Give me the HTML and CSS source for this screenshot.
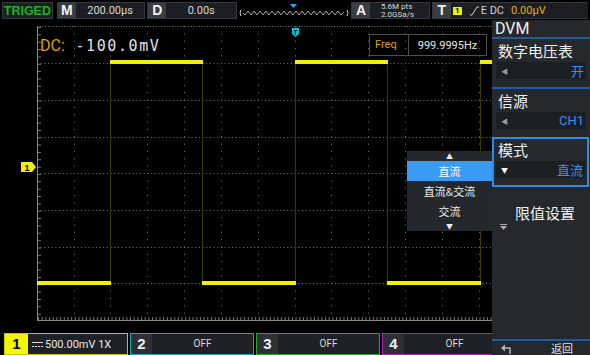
FILE: index.html
```html
<!DOCTYPE html>
<html lang="zh">
<head>
    <meta charset="UTF-8">
    <title>DVM</title>
    <link rel="stylesheet" href="styles.css">
</head>
<body>
<div class="screen">
    <div class="topbar">
        <div class="tbox triged">TRIGED</div>
        <div class="tbox tb-m"><span class="tkey">M</span><span class="tval">200.00µs</span></div>
        <div class="tbox tb-d"><span class="tkey">D</span><span class="tval">0.00s</span></div>
        <div class="mini">
            <svg width="110" height="18" viewBox="0 0 110 18">
                <path d="M2 8 Q0 11 2 14" stroke="#cfcfcf" fill="none"/>
                <path d="M108 8 Q110 11 108 14" stroke="#cfcfcf" fill="none"/>
                <polyline fill="none" stroke="#a8a8a8" stroke-width="1" points="4,11 6,13 9,9 12,13 15,9 18,13 21,9 24,13 27,9 30,13 33,9 36,13 39,9 42,13 45,9 48,13 51,9 54,13 57,9 60,13 63,9 66,13 69,9 72,13 75,9 78,13 81,9 84,13 87,9 90,13 93,9 96,13 99,9 102,13 105,10"/>
                <polygon points="51,2 58,2 54.5,6" fill="#3c9cf0"/>
            </svg>
        </div>
        <div class="tbox tb-a"><span class="tkey">A</span><span class="tval two"><span>5.6M pts</span><span>2.0GSa/s</span></span></div>
        <div class="tbox tb-t">
            <span class="tkey">T</span>
            <span class="chip">1</span>
            <svg class="slope" width="9" height="10" viewBox="0 0 9 10"><polyline points="0,9 2,9 7,1 9,1" fill="none" stroke="#cfcfcf"/></svg>
            <span class="trig-t">E DC</span>
            <span class="trig-v">0.00µV</span>
        </div>
    </div>

    <div class="main">
        <div class="left">
            <div class="scope">
                <svg class="grid" width="492" height="312" viewBox="0 0 492 312">
                    <g stroke="#777" stroke-width="1" fill="none">
                        <path stroke-dasharray="1 2.68" d="M37 43.5H492 M37 80.5H492 M37 117.5H492 M37 153.5H492 M37 190.5H492 M37 227.5H492 M37 263.5H492"/>
                        <path stroke-dasharray="1 6.35" d="M74.5 6V300 M110.5 6V300 M147.5 6V300 M184.5 6V300 M221.5 6V300 M258.5 6V300 M295.5 6V300 M331.5 6V300 M368.5 6V300 M405.5 6V300 M442.5 6V300 M479.5 6V300"/>
                        <path stroke-dasharray="1 1.7" d="M37 6.5H492"/>
                        <path stroke="#8a8a8a" d="M37.5 6V301 M37 300.5H492"/>
                        <path stroke-width="3" stroke-dasharray="1 6.35" d="M39.5 7V300"/>
                        <path stroke-width="3" stroke-dasharray="1 2.68" d="M38 298.5H492"/>
                    </g>
                    <path stroke="#3a3a00" stroke-width="1" d="M110.5 42V263 M202.5 42V263 M295.5 42V263 M387.5 42V263 M480.5 42V263"/>
                    <path stroke="#f0f000" stroke-width="4" fill="none" d="M37 263H111 M110 42H203 M202 263H296 M295 42H388 M387 263H481 M480 42H492"/>
                    <polygon points="292,8 299,8 299,14 295.5,17 292,14" fill="#00c4dc"/>
                    <text x="295.5" y="14.5" class="mk-t">T</text>
                    <polygon points="21,142 32,142 36,147 32,152 21,152" fill="#f0f000"/>
                    <text x="27" y="151" class="mk-1">1</text>
                </svg>

                <div class="dc-read"><span class="dc-lbl">DC:</span> -100.0mV</div>

                <div class="freq">
                    <span class="freq-lbl">Freq</span>
                    <span class="freq-val">999.9995Hz</span>
                </div>

                <div class="popup">
                    <div class="pop-arrow">&#9650;</div>
                    <div class="pop-item active">直流</div>
                    <div class="pop-item">直流&amp;交流</div>
                    <div class="pop-item">交流</div>
                    <div class="pop-arrow">&#9660;</div>
                </div>
            </div>

            <div class="chbar">
                <div class="ch ch1">
                    <span class="ch-num">1</span>
                    <span class="ch-info">
                        <svg width="11" height="7" viewBox="0 0 11 7"><path d="M0 1.5H11" stroke="#ddd"/><path d="M0 5.5H11" stroke="#ddd" stroke-dasharray="2 1"/></svg>
                        500.00mV 1X
                    </span>
                </div>
                <div class="ch ch2"><span class="ch-num">2</span><span class="ch-off">OFF</span></div>
                <div class="ch ch3"><span class="ch-num">3</span><span class="ch-off">OFF</span></div>
                <div class="ch ch4"><span class="ch-num">4</span><span class="ch-off">OFF</span></div>
            </div>
        </div>

        <div class="menu">
            <div class="menu-title">DVM</div>
            <div class="msec">
                <div class="mlabel">数字电压表</div>
                <div class="mbox"><span class="marrow">&#9664;</span><span class="mval">开</span></div>
            </div>
            <div class="msec">
                <div class="mlabel">信源</div>
                <div class="mbox"><span class="marrow">&#9664;</span><span class="mval">CH1</span></div>
            </div>
            <div class="msec selected">
                <div class="mlabel">模式</div>
                <div class="mbox"><span class="marrow white">&#9660;</span><span class="mval">直流</span></div>
            </div>
            <div class="msec plain">
                <div class="mbig">限值设置</div>
                <svg class="mfold" width="7" height="6" viewBox="0 0 7 6"><path d="M0 0.5H7" stroke="#aaa"/><polygon points="0,2 7,2 3.5,6" fill="#aaa"/></svg>
            </div>
            <div class="mspace"></div>
            <div class="mback">
                <svg width="12" height="11" viewBox="0 0 12 11"><path d="M9 11V5H2" stroke="#b5b5b5" stroke-width="1.5" fill="none"/><polygon points="0,5 4,1.5 4,8.5" fill="#b5b5b5"/></svg>
                <span>返回</span>
            </div>
        </div>
    </div>
</div>
</body>
</html>
```

FILE: styles.css
```css
* {
    margin: 0;
    padding: 0;
    box-sizing: border-box;
}

body {
    background: #000;
    font-family: Roboto, "Noto Sans", "Noto Sans CJK SC", sans-serif;
    color: #ddd;
}

.screen {
    width: 590px;
    height: 355px;
    overflow: hidden;
    background: #000;
}

/* top status bar */
.topbar {
    height: 20px;
    display: flex;
    align-items: flex-start;
    padding: 2px 0 0 2px;
}

.tbox {
    height: 17px;
    display: flex;
    align-items: center;
    background: #1b1e22;
    border: 1px solid #34373c;
    margin-right: 2px;
}

.triged {
    width: 51px;
    justify-content: center;
    color: #1db31d;
    font-weight: bold;
    font-size: 12.5px;
    font-family: "Liberation Sans", Arial, sans-serif;
    margin-right: 4px;
}

.tkey {
    width: 18px;
    height: 15px;
    background: #3a3d42;
    color: #f2f2f2;
    font-weight: bold;
    font-size: 14px;
    line-height: 15px;
    text-align: center;
    font-family: "Liberation Sans", Arial, sans-serif;
}

.tval {
    flex: 1;
    text-align: center;
    font-size: 11px;
    color: #d8d8d8;
}

.tval.two {
    display: flex;
    flex-direction: column;
    font-size: 8px;
    line-height: 8px;
    padding-left: 11px;
    text-align: left;
}

.tb-m { width: 89px; }
.tb-d { width: 90px; }
.tb-a { width: 79px; }
.tb-t {
    width: 157px;
    border-right: none;
}

.mini {
    width: 110px;
    height: 18px;
    margin-right: 2px;
}

.chip {
    width: 9px;
    height: 8px;
    margin-left: 2px;
    background: #f0f000;
    color: #000;
    font-size: 8px;
    line-height: 8px;
    font-weight: bold;
    text-align: center;
}

.slope {
    margin-left: 8px;
}

.trig-t {
    font-size: 11px;
    color: #cfcfcf;
    margin-left: 2px;
}

.trig-v {
    font-size: 11px;
    color: #e3b000;
    margin-left: 7px;
}

/* main area */
.main {
    display: flex;
    height: 335px;
}

.left {
    width: 492px;
    overflow: hidden;
    display: flex;
    flex-direction: column;
}

.scope {
    position: relative;
    height: 312px;
}

.grid {
    display: block;
}

.mk-t {
    font: bold 7px "Liberation Sans", Arial, sans-serif;
    fill: #000;
    text-anchor: middle;
}

.mk-1 {
    font: bold 9px "Liberation Sans", Arial, sans-serif;
    fill: #000;
    text-anchor: middle;
}

.dc-read {
    position: absolute;
    left: 40px;
    top: 16px;
    font-family: "DejaVu Sans Mono", monospace;
    font-size: 15px;
    line-height: 20px;
    letter-spacing: 1.6px;
    color: #e0e0e0;
}

.dc-lbl {
    font-family: Roboto, sans-serif;
    color: #dba300;
    letter-spacing: 0;
    font-size: 16px;
}

.freq {
    position: absolute;
    left: 369px;
    top: 14px;
    width: 118px;
    height: 22px;
    border: 1px solid #4e4e4e;
    display: flex;
    align-items: center;
    font-size: 11px;
}

.freq-lbl {
    width: 39px;
    height: 100%;
    line-height: 20px;
    padding-left: 5px;
    color: #dba300;
    border-right: 1px solid #4e4e4e;
}

.freq-val {
    flex: 1;
    text-align: center;
    color: #e6e6e6;
}

.popup {
    position: absolute;
    left: 407px;
    top: 131px;
    width: 85px;
    height: 80px;
    background: #24272b;
    font-family: "Noto Sans CJK SC", sans-serif;
    font-size: 11px;
    color: #eee;
    text-align: center;
}

.pop-arrow {
    height: 10px;
    line-height: 10px;
    font-size: 7px;
    color: #eee;
}

.pop-item {
    height: 20px;
    line-height: 20px;
}

.pop-item.active {
    background: #3a9bf4;
    color: #fff;
}

/* channel bar */
.chbar {
    height: 23px;
    display: flex;
    gap: 2px;
    padding: 1px 0 0 4px;
}

.ch {
    flex: 0 0 124px;
    height: 22px;
    display: flex;
    background: #1e2125;
    border: 1px solid #888;
    font-size: 10px;
    color: #ddd;
}

.ch1 { border-color: #c8c800; }
.ch2 { border-color: #1aa9b8; }
.ch3 { border-color: #1fae2a; }
.ch4 { border-color: #b21fb8; }

.ch-num {
    width: 21px;
    text-align: center;
    font: bold 15px/20px "Liberation Sans", Arial, sans-serif;
    background: #2d3035;
    color: #f0f0f0;
}

.ch1 .ch-num {
    background: #f5f500;
    color: #000;
    width: 23px;
}

.ch-info {
    display: flex;
    align-items: center;
    gap: 2px;
    padding-left: 4px;
    font-size: 11px;
    color: #e8e8e8;
}

.ch-off {
    flex: 1;
    text-align: center;
    line-height: 20px;
}

/* right menu */
.menu {
    width: 98px;
    background: #25282c;
    display: flex;
    flex-direction: column;
    font-family: "Noto Sans CJK SC", sans-serif;
}

.menu-title {
    height: 17px;
    line-height: 17px;
    font-family: Roboto, sans-serif;
    font-size: 16px;
    padding-left: 3px;
    color: #f0f0f0;
}

.msec {
    height: 50px;
    border-top: 2px solid #1d5c9f;
    padding: 2px 4px 0 4px;
}

.msec.selected {
    border: 2px solid #2c8ceb;
    padding: 1px 2px 0 2px;
    margin-right: 1px;
}

.msec.plain {
    border-top: 1px solid #1c1f23;
}

.mlabel {
    height: 19px;
    line-height: 19px;
    font-size: 15px;
    color: #f0f0f0;
    padding-left: 2px;
}

.mbox {
    margin-top: 2px;
    height: 17px;
    background: #1b1e22;
    display: flex;
    align-items: center;
    justify-content: space-between;
    padding: 0 2px 0 5px;
}

.marrow {
    font-size: 7px;
    color: #9a9a9a;
}

.marrow.white {
    color: #fff;
}

.mval {
    font-size: 13px;
    color: #3592f0;
    font-family: Roboto, "Noto Sans CJK SC", sans-serif;
}

.mbig {
    margin-top: 12px;
    text-align: center;
    font-size: 15px;
    color: #f0f0f0;
    padding-left: 8px;
}

.mfold {
    display: block;
    margin: 1px 0 0 4px;
}

.mspace {
    flex: 1;
}

.mback {
    height: 16px;
    border-top: 2px solid #1d5c9f;
    display: flex;
    align-items: center;
    justify-content: space-between;
    padding: 0 17px 0 9px;
    font-size: 11px;
    color: #e0e0e0;
}
```
